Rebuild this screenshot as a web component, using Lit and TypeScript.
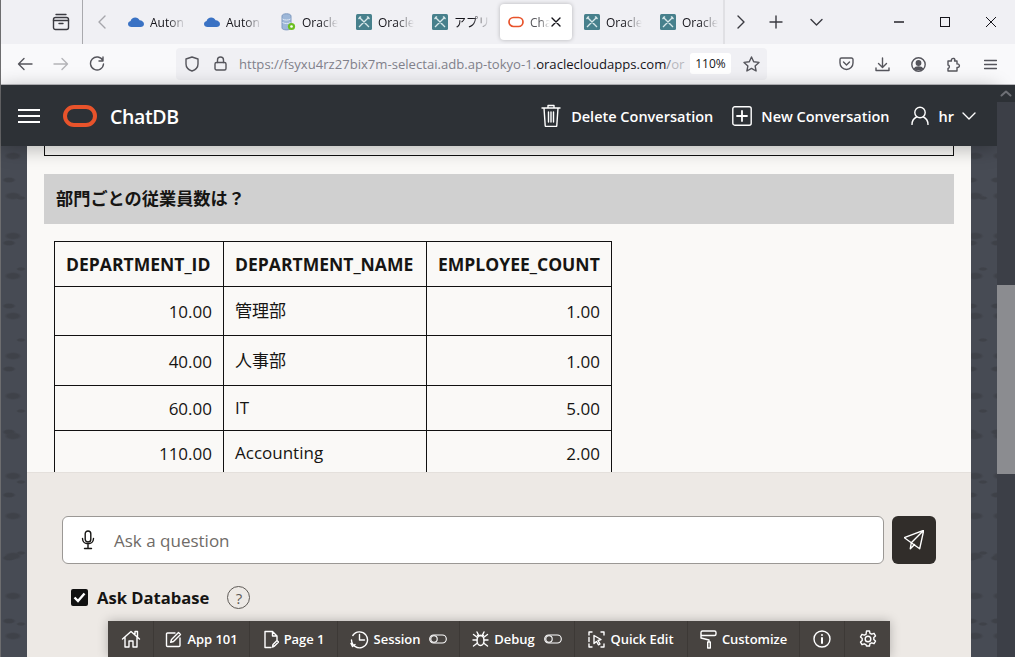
import { LitElement, html, css, svg } from "lit";
import { customElement } from "lit/decorators.js";

const ic = (w: number, h: number, vb: string, body: any, cls = "") =>
  html`<svg class="ic ${cls}" width=${w} height=${h} viewBox=${vb} fill="none" stroke="currentColor" stroke-width="1.4" stroke-linecap="round" stroke-linejoin="round">${body}</svg>`;

const cloud = html`<svg width="16" height="16" viewBox="0 0 16 16"><path fill="#3a72c4" d="M3.600 13C1.600 13 0 11.700 0 10c0-1.500 1.100-2.700 2.600-3C3.100 5 5 3.500 7.200 3.500c2 0 3.700 1.100 4.400 2.800C14 6.400 16 8 16 10c0 1.700-1.500 3-3.400 3z"/></svg>`;
const db = html`<svg width="16" height="18" viewBox="0 0 16 18"><path fill="#9db7d8" stroke="#7f9ac0" d="M2 3c0-3 9-3 9 0v12c0 2.500-9 2.500-9 0z"/><path stroke="#dfe8f4" fill="none" d="M2.500 6c2 1.400 6 1.400 8 0M2.500 9.500c2 1.400 6 1.400 8 0"/><circle cx="11.500" cy="13.500" r="3.600" fill="#6cc020"/><circle cx="11.500" cy="13.500" r="1.300" fill="#fff"/></svg>`;
const teal = html`<svg width="16" height="16" viewBox="0 0 16 16"><rect width="16" height="16" rx="1.500" fill="#47808c"/><path stroke="#d8e8ea" stroke-width="1.300" fill="none" d="M3 13 13 3M11 2.500l2.500 2.500M3 3l10 10M2.500 5 5 2.500M5.500 6.500l1-1M9.500 10.500l1-1"/></svg>`;
const ora = html`<svg width="16" height="16" viewBox="0 0 16 16"><rect x="1" y="3.500" width="14" height="9" rx="4.500" fill="none" stroke="#e8532b" stroke-width="1.700"/></svg>`;

const tabs = [
  { i: cloud, t: "Auton" }, { i: cloud, t: "Auton" }, { i: db, t: "Oracle" }, { i: teal, t: "Oracle" },
  { i: teal, t: "アプリケ" }, { i: ora, t: "Cha", active: true }, { i: teal, t: "Oracle" }, { i: teal, t: "Oracle" },
];

const rows = [
  { c: ["10.00", "管理部", "1.00"], h: "h49" },
  { c: ["40.00", "人事部", "1.00"], h: "h50" },
  { c: ["60.00", "IT", "5.00"], h: "" },
  { c: ["110.00", "Accounting", "2.00"], h: "" },
];

const toggle = ic(18, 10, "0 0 18 10", svg`<rect x=".7" y="1" width="16.600" height="8" rx="4" stroke-width="1.100"/><circle cx="5" cy="5" r="3.200" stroke-width="1.100"/>`);

const devIcons = {
  home: ic(20, 20, "0 0 20 20", svg`<path d="M1.500 10 10 2.500 18.500 10M4 8v10h4v-6h4v6h4V8M14 5V2.500h2.500V7.500"/>`),
  app: ic(17, 17, "0 0 17 17", svg`<path d="M10 2H2.500A1 1 0 0 0 1.500 3v11.500a1 1 0 0 0 1 1H14a1 1 0 0 0 1-1V7M6.500 8.500 13.500 1.500l2 2-7 7-2.800.8z"/>`),
  page: ic(16, 19, "0 0 16 19", svg`<path d="M8 17.500H2V1.500h7.500L14 6v4M9.500 1.500V6H14M9.500 17l.5-2.500 4-4 1.500 1.500-4 4z"/>`),
  sess: ic(19, 19, "0 0 19 19", svg`<path d="M2.800 5.500A8 8 0 1 1 1.500 10M1 13.500l1.500 3 2.500-2M9.500 4.500v5.500h5"/>`),
  bug: ic(17, 18, "0 0 17 18", svg`<ellipse cx="8.500" cy="10.500" rx="3.500" ry="5"/><path d="M5.500 5.500h6M5 2l1.500 3M12 2l-1.500 3M5 10H1M12 10h4M1.500 4.500l4 3M15.500 4.500l-4 3M1.500 16l4-3M15.500 16l-4-3"/>`),
  quick: ic(17, 17, "0 0 17 17", svg`<path d="M1 4V1h3M13 1h3v3M16 13v3h-3M4 16H1V13M1 6.500v4M6 4.500l7 4-3 1 2 3.500-1.500.8-2-3.300-2.500 2z"/>`),
  roller: ic(17, 19, "0 0 17 19", svg`<path d="M1 3.500v-1A1.500 1.500 0 0 1 2.500 1h12A1.500 1.500 0 0 1 16 2.500V4a1.500 1.500 0 0 1-1.500 1.500h-12A1.500 1.500 0 0 1 1 3.500zM1 3.500V8l8 2v2M7.700 12h2.600v6H7.700z"/>`),
  info: ic(18, 18, "0 0 18 18", svg`<circle cx="9" cy="9" r="8"/><path stroke-width="2" d="M9 8v5M9 5v.1"/>`),
  gear: ic(18, 18, "0 0 18 18", svg`<circle cx="9" cy="9" r="2.800"/><path d="M7.500 1h3l.5 2.300 1.800.9 2.200-.9 1.500 2.600-1.700 1.600v2l1.700 1.600-1.500 2.600-2.200-.9-1.800.9-.5 2.300h-3L7 14.700l-1.800-.9-2.200.9-1.500-2.600 1.700-1.600v-2L1.500 6.900 3 4.300l2.200.9L7 4.300z"/>`),
};

@customElement("app-root")
export class AppRoot extends LitElement {
  static styles = css`
    :host { display: block; width: 1015px; height: 657px; overflow: hidden; font-family: "Open Sans", "Noto Sans CJK JP", sans-serif; }
    .win { height: 657px; display: flex; flex-direction: column; box-sizing: border-box; border-left: 1px solid #6d6d6f; }
    .ic { display: block; flex: none; }

    .tabbar { height: 44px; flex: none; background: #f0f0f4; display: flex; color: #3a3a40; padding-right: 1px; }
    .tabbar .left { width: 82px; box-sizing: border-box; border-right: 1px solid #a9a9ad; display: flex; align-items: center; padding-left: 51px; }
    .slot { display: flex; align-items: center; justify-content: center; flex: none; }
    .back { width: 33px; color: #a6a6ab; height: 44px; padding-left: 5px; box-sizing: border-box; }
    .tab { width: 76px; height: 44px; box-sizing: border-box; padding-left: 12px; display: flex; align-items: center; gap: 6px; font-size: 12px; color: #15141a; flex: none; }
    .tab .fav { width: 16px; display: flex; justify-content: center; flex: none; }
    .tab .lbl { width: 36px; overflow: hidden; white-space: nowrap; -webkit-mask-image: linear-gradient(90deg, #000 50%, transparent 100%); mask-image: linear-gradient(90deg, #000 50%, transparent 100%); }
    .tab.active { margin-left: 4px; width: 72px; height: 36px; margin-top: 4px; padding-left: 8px; background: #fff; border-radius: 4px; box-shadow: 0 0 4px rgba(0,0,0,.25); }
    .tab.active .lbl { width: 20px; color: #55555a; }
    .tab.active .x { margin-left: -5px; color: #15141a; }
    .sep { width: 0; border-left: 2px solid #e0e0e4; height: 44px; margin-left: -1px; }
    .s34 { width: 34px; height: 44px; }
    .cr { padding-right: 2px; box-sizing: border-box; }
    .s36 { width: 36px; height: 44px; }
    .s6 { width: 5px; }
    .grow { flex: 1; }
    .s46 { width: 46px; height: 44px; color: #15141a; }

    .nav { height: 41px; flex: none; box-sizing: border-box; background: #f9f9fb; border-bottom: 1px solid #bcbcc0; display: flex; align-items: center; padding-left: 6px; color: #55555c; }
    .nav .s36 { height: 40px; }
    .nav .dim { color: #b4b4b8; }
    .gap61 { width: 61px; flex: none; }
    .url { width: 591px; height: 32px; background: #f0f0f4; border-radius: 4px; display: flex; align-items: center; flex: none; box-sizing: border-box; padding-left: 9px; margin-top: -1px; }
    .url .lock { margin-left: 15px; margin-right: 12px; }
    .url .txt { width: 442px; white-space: nowrap; font-size: 13.1px; color: #80808a; flex: none; }
    .url .txt b { font-weight: 400; color: #15141a; }
    .url .txt i { font-style: normal; color: #b8b8be; }
    .chip { width: 41px; height: 21px; background: #fff; border-radius: 3px; margin-left: 9px; font-size: 12px; color: #15141a; display: flex; align-items: center; justify-content: center; flex: none; }
    .star { margin-left: 12px; }
    .gap61b { width: 61px; flex: none; }

    .hdr { height: 61px; flex: none; background: #2d3136; color: #fff; display: flex; align-items: center; padding-left: 17px; position: relative; z-index: 2; box-shadow: 0 3px 18px rgba(0,0,0,.28); margin-right: 18px; }
    .burger { width: 22px; display: flex; flex-direction: column; gap: 4px; margin-right: 23px; flex: none; }
    .burger i { display: block; height: 2px; background: #fff; }
    .brand { font-size: 19.500px; font-weight: 600; margin-left: 13px; letter-spacing: -.35px; padding-top: 2px; }
    .act { display: flex; align-items: center; font-size: 14.500px; font-weight: 600; }
    .hgrow { flex: 1; }
    .m1, .m2, .m3 { padding-top: 2px; }
    .m1 { margin: 0 19px 0 10px; } .m2 { margin: 0 21px 0 9px; } .m3 { margin: 0 8px 0 10px; }
    .hend { width: 21px; flex: none; }

    .body { flex: 1; min-height: 0; display: flex; position: relative; }
    .desk { flex: 1; min-width: 0; padding: 0 26px; display: flex; flex-direction: column; background-color: #474b54;
      background-image: radial-gradient(ellipse 9px 4px at 12px 10px, #3f4249 60%, transparent 100%), radial-gradient(ellipse 7px 3px at 8px 34px, #3e4148 60%, transparent 100%), radial-gradient(ellipse 5px 2px at 20px 52px, #3f4249 60%, transparent 100%);
      background-size: 26px 40px, 26px 63px, 26px 71px; }
    .sbar { width: 18px; flex: none; background: #3c3f47; margin-top: -61px; display: flex; flex-direction: column; position: relative; z-index: 3; }
    .sbar .top { height: 17px; display: flex; align-items: center; justify-content: center; color: #6e7076; background: #2d3136; }
    .sbar .thumb { height: 189px; background: #8b8c90; margin-top: 183px; }
    .panel { flex: 1; min-height: 0; display: flex; flex-direction: column; }
    .scroll { height: 326px; flex: none; background: #faf9f7; padding: 0 17px; overflow: hidden; box-sizing: border-box; }
    .prev { height: 10px; box-sizing: border-box; border: 1px solid #111; border-top: none; }
    .q { margin-top: 18px; height: 50px; box-sizing: border-box; padding: 0 0 3px 12px; background: #d0d0d0; display: flex; align-items: center; font-weight: 700; font-size: 17.200px; color: #161513; font-family: "Noto Sans CJK JP", sans-serif; }
    table { border-collapse: collapse; margin: 17px 0 0 10px; color: #161513; font-size: 17px; line-height: 22px; background: #faf9f7; table-layout: fixed; width: 557px; }
    th, td { border: 1px solid #111; padding: 11px; white-space: nowrap; }
    th { font-weight: 700; font-size: 17.550px; text-align: left; }
    td.n { text-align: right; padding-top: 12px; padding-bottom: 10px; }
    .h49 td { height: 26px; } .h50 td { height: 27px; }
    .c1 { width: 169px; } .c2 { width: 203px; } .c3 { width: 185px; }

    .foot { flex: 1; min-height: 0; background: #ede9e5; border-top: 1px solid #e4e0dc; box-sizing: border-box; padding: 43px 35px 0; }
    .row1 { display: flex; gap: 8px; }
    .input { width: 822px; height: 48px; box-sizing: border-box; background: #fff; border: 1px solid #9b9895; border-radius: 6px; display: flex; align-items: center; padding-left: 17px; gap: 18px; font-size: 17px; color: #6f6b67; flex: none; }
    .send { width: 44px; height: 48px; background: #312d2a; border-radius: 6px; display: flex; align-items: center; justify-content: center; color: #fff; flex: none; }
    .row2 { display: flex; align-items: center; margin: 22px 0 0 9px; font-weight: 700; font-size: 16.600px; color: #161513; }
    .cb { width: 17px; height: 17px; background: #111; border-radius: 2px; display: flex; align-items: center; justify-content: center; margin-right: 9px; flex: none; }
    .help { width: 23px; height: 23px; box-sizing: border-box; border: 1.300px solid #5e5a56; border-radius: 50%; margin-left: 18px; font-size: 15px; font-weight: 400; color: #5e5a56; display: flex; align-items: center; justify-content: center; }

    .dev { position: absolute; left: 107px; bottom: 0; height: 36px; display: grid; grid-template-columns: 45px 96px 88px 122px 115px 113px 112px 45px 46px; background: #474340; color: #fff; font-size: 13px; font-weight: 600; letter-spacing: -.05px; box-shadow: 0 0 10px rgba(0,0,0,.25); z-index: 4; }
    .dev > div { display: flex; align-items: center; justify-content: center; gap: 5px; border-left: 1px solid #3d3936; white-space: nowrap; }
    .dev > div:first-child { border-left: none; }
    .tg { margin-left: 4px; }
  `;

  render() {
    return html`<div class="win">
      <div class="tabbar">
        <div class="left">${ic(18, 18, "0 0 18 18", svg`<path d="M4 1.500h10"/><rect x="1.500" y="4.500" width="15" height="12" rx="2"/><path d="M1.500 7.500h15M7 10.500h4"/>`)}</div>
        <div class="slot back">${ic(10, 14, "0 0 10 14", svg`<path d="M8 1 2 7l6 6"/>`)}</div>
        ${tabs.map((t) => html`<div class="tab ${t.active ? "active" : ""}"><span class="fav">${t.i}</span><span class="lbl">${t.t}</span>${t.active ? html`<span class="x">${ic(10, 10, "0 0 10 10", svg`<path d="M1 1l8 8M9 1 1 9"/>`)}</span>` : ""}</div>`)}
        <div class="sep"></div>
        <div class="slot s34 cr">${ic(10, 14, "0 0 10 14", svg`<path d="M2 1l6 6-6 6"/>`)}</div>
        <div class="slot s34">${ic(14, 14, "0 0 14 14", svg`<path d="M7 1v12M1 7h12"/>`)}</div>
        <div class="s6"></div>
        <div class="slot s36">${ic(13, 8, "0 0 13 8", svg`<path d="M1 1.500 6.500 7 12 1.500"/>`)}</div>
        <div class="grow"></div>
        <div class="slot s46">${ic(10, 2, "0 0 10 2", svg`<path d="M0 1h10" stroke-linecap="butt"/>`)}</div>
        <div class="slot s46">${ic(10, 10, "0 0 10 10", svg`<rect x=".5" y=".5" width="9" height="9" stroke-width="1" stroke-linejoin="miter"/>`)}</div>
        <div class="slot s46">${ic(10, 10, "0 0 10 10", svg`<path d="M0 0l10 10M10 0 0 10" stroke-width="1" stroke-linecap="butt"/>`)}</div>
      </div>

      <div class="nav">
        <div class="slot s36">${ic(16, 14, "0 0 16 14", svg`<path d="M15 7H1.500M7 1.500 1.500 7 7 12.500"/>`)}</div>
        <div class="slot s36 dim">${ic(16, 14, "0 0 16 14", svg`<path d="M1 7h13.500M9 1.500 14.500 7 9 12.500"/>`)}</div>
        <div class="slot s36">${ic(16, 16, "0 0 16 16", svg`<path d="M13.800 4.500A6.500 6.500 0 1 0 14.500 8M14 1v4h-4"/>`)}</div>
        <div class="gap61"></div>
        <div class="url">
          ${ic(14, 16, "0 0 14 16", svg`<path d="M7 1 1 3v5c0 3.500 3 6 6 7 3-1 6-3.500 6-7V3z"/>`)}
          <span class="lock">${ic(13, 15, "0 0 13 15", svg`<rect x="1" y="6.500" width="11" height="7.500" rx="1.500"/><path d="M3.500 6.500V4a3 3 0 0 1 6 0v2.500"/>`)}</span>
          <span class="txt">https://fsyxu4rz27bix7m-selectai.adb.ap-tokyo-1.<b>oraclecloudapps.com</b>/<i>or</i></span>
          <span class="chip">110%</span>
          <span class="star">${ic(17, 16, "0 0 17 16", svg`<path d="M8.500 1l2.200 4.800 5.300.6-3.900 3.500 1 5.100-4.600-2.600-4.600 2.600 1-5.100L1 6.400l5.300-.6z"/>`)}</span>
        </div>
        <div class="gap61b"></div>
        <div class="slot s36">${ic(15, 14, "0 0 15 14", svg`<path d="M2.500 1h10A1.500 1.500 0 0 1 14 2.500V6A6.500 6.500 0 0 1 1 6V2.500A1.500 1.500 0 0 1 2.500 1zM4.500 5l3 3 3-3"/>`)}</div>
        <div class="slot s36">${ic(15, 15, "0 0 15 15", svg`<path d="M7.500 1v9M3.500 6.500l4 4 4-4M1 11v2.500h13V11"/>`)}</div>
        <div class="slot s36">${ic(15, 15, "0 0 15 15", svg`<circle cx="7.500" cy="7.500" r="6.700"/><circle cx="7.500" cy="6" r="2.200" fill="currentColor"/><path fill="currentColor" d="M3.500 11.500c1-2 7-2 8 0-1.500 1.500-6.500 1.500-8 0z"/>`)}</div>
        <div class="slot s36">${ic(15, 16, "0 0 15 16", svg`<path d="M1 5h3.500a1.700 1.700 0 1 1 3.400-1.500L7.500 5H10v3a1.800 1.800 0 1 1 0 3.400V15H1v-2.500a1.800 1.800 0 0 0 0-3.500z"/>`)}</div>
        <div class="slot s36">${ic(13, 11, "0 0 13 11", svg`<path d="M.5 1.500h12M.5 5.500h12M.5 9.500h12"/>`)}</div>
      </div>

      <div class="hdr">
        <div class="burger"><i></i><i></i><i></i></div>
        <svg class="ic" width="34" height="22" viewBox="0 0 34 22"><rect x="2" y="2" width="30" height="18" rx="9" fill="none" stroke="#e8532b" stroke-width="4"/></svg>
        <span class="brand">ChatDB</span>
        <div class="hgrow"></div>
        <div class="act">${ic(20, 23, "0 0 20 23", svg`<path d="M1 4h18M7 4V1.500h6V4M3 4l1.200 17.500a1 1 0 0 0 1 1h9.600a1 1 0 0 0 1-1L17 4M7.500 8v10M10 8v10M12.500 8v10"/>`)}<span class="m1">Delete Conversation</span></div>
        <div class="act">${ic(20, 20, "0 0 20 20", svg`<rect x=".8" y=".8" width="18.400" height="18.400" rx="2"/><path stroke-width="1.800" d="M10 5v10M5 10h10"/>`)}<span class="m2">New Conversation</span></div>
        <div class="act">${ic(18, 19, "0 0 18 19", svg`<circle cx="9" cy="6.500" r="5.200"/><path d="M1 18.500c0-4 2.500-6.500 4.500-7.500M17 18.500c0-4-2.500-6.500-4.500-7.500"/>`)}<span class="m3">hr</span>${ic(14, 8, "0 0 14 8", svg`<path d="M1 1l6 6 6-6"/>`)}</div>
        <div class="hend"></div>
      </div>

      <div class="body">
        <div class="desk">
          <div class="panel">
            <div class="scroll">
              <div class="prev"></div>
              <div class="q">部門ごとの従業員数は？</div>
              <table>
                <colgroup><col class="c1"><col class="c2"><col class="c3"></colgroup>
                <tr><th>DEPARTMENT_ID</th><th>DEPARTMENT_NAME</th><th>EMPLOYEE_COUNT</th></tr>
                ${rows.map((r) => html`<tr class=${r.h}><td class="n">${r.c[0]}</td><td>${r.c[1]}</td><td class="n">${r.c[2]}</td></tr>`)}
              </table>
            </div>
            <div class="foot">
              <div class="row1">
                <div class="input">
                  <svg class="ic" width="16" height="20" viewBox="0 0 16 20" fill="none" stroke="#161513" stroke-width="1.400" stroke-linecap="round"><rect x="5.200" y="1" width="5.600" height="11" rx="2.800"/><path d="M2.500 8.500c0 7 11 7 11 0M8 14.500V18M4.500 18.500h7"/></svg>
                  <span>Ask a question</span>
                </div>
                <div class="send">${ic(20, 20, "0 0 20 20", svg`<path d="M.3 7.700 19.700.3 15.700 18.700 7.300 12.700zM19.700.3 7.300 12.700 6.300 18.700 10.600 14.500"/>`)}</div>
              </div>
              <div class="row2">
                <div class="cb"><svg width="13" height="11" viewBox="0 0 13 11" fill="none" stroke="#fff" stroke-width="2.400"><path d="M1.500 5.500 5 9l6.500-7.500"/></svg></div>
                <span>Ask Database</span>
                <div class="help">?</div>
              </div>
            </div>
          </div>
        </div>
        <div class="sbar">
          <div class="top">${ic(12, 7, "0 0 12 7", svg`<path stroke-width="2" d="M1.500 5.500 6 1.500l4.500 4"/>`)}</div>
          <div class="thumb"></div>
        </div>
        <div class="dev">
          <div>${devIcons.home}</div>
          <div>${devIcons.app}<span>App 101</span></div>
          <div>${devIcons.page}<span>Page 1</span></div>
          <div>${devIcons.sess}<span>Session</span><span class="tg">${toggle}</span></div>
          <div>${devIcons.bug}<span>Debug</span><span class="tg">${toggle}</span></div>
          <div>${devIcons.quick}<span>Quick Edit</span></div>
          <div>${devIcons.roller}<span>Customize</span></div>
          <div>${devIcons.info}</div>
          <div>${devIcons.gear}</div>
        </div>
      </div>
    </div>`;
  }
}
